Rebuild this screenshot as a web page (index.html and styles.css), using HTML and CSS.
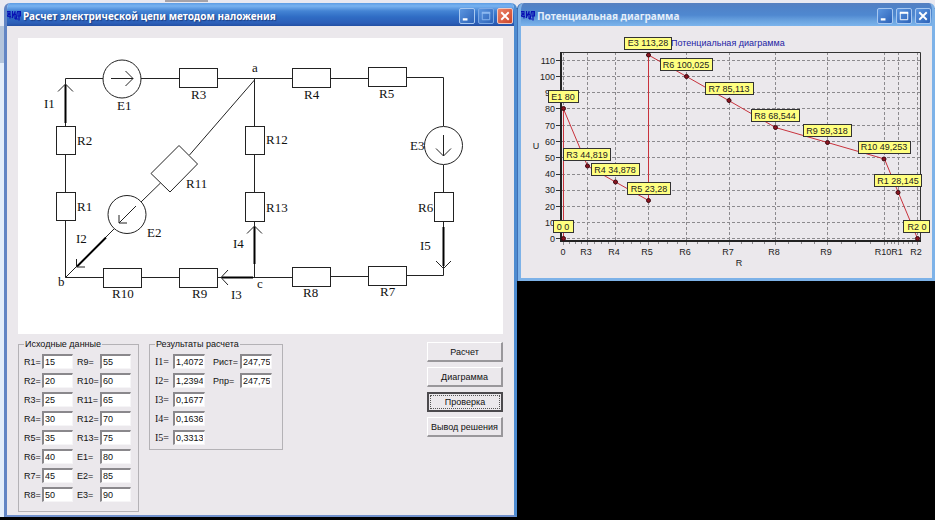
FILE: index.html
```html
<!DOCTYPE html>
<html lang="ru">
<head>
    <meta charset="UTF-8">
    <meta name="viewport" content="width=device-width, initial-scale=1.0">
    <title>Расчет электрической цепи методом наложения</title>
    <link rel="stylesheet" href="styles.css">
</head>
<body>
    <div class="desktop">
        <section class="window">
            <header class="title-bar">
                <svg class="app-icon" width="14" height="11" viewBox="0 0 14 11" fill="none" stroke="#0a12b4" stroke-width="1.2">
                    <path d="M0 1.5h3v7M1 2v4.5h3M0 6l3-3M5.5 1v7M5 8l3-6M8 1v8M6 4.5h3M9 9.5l1.5-8h3v4.5h-3M12 1v9.5M8 9h3"/>
                </svg>
                <h1>Расчет электрической цепи методом наложения</h1>
                <div class="title-buttons">
                    <button type="button" class="title-button" aria-label="Свернуть">
                        <svg viewBox="0 0 15 15"><path d="M3 11h5" stroke-width="2.4"/></svg>
                    </button>
                    <button type="button" class="title-button disabled" aria-label="Развернуть" disabled>
                        <svg viewBox="0 0 15 15"><path d="M3.5 4v7.5h8V4z"/><path d="M3 4h9" stroke-width="2"/></svg>
                    </button>
                    <button type="button" class="title-button close" aria-label="Закрыть">
                        <svg viewBox="0 0 15 15"><path d="M3.5 3.5l8 8M11.500 3.5l-8 8" stroke-width="2"/></svg>
                    </button>
                </div>
            </header>

            <div class="window-body">
                <svg class="circuit" viewBox="18 38 485 296">
                    <!-- wires -->
                    <path class="wire" d="M103 78.500H65.500V126M141 78.500H179M217 78.500H292M330 78.500H368M406 77.500H443.500V126
                        M443.500 165V192M443.500 221V275.500H406M368 276.500H330M292 277.500H217M179 277.500H141M103 277.500H65.500V220M65.500 192V154
                        M254.500 79V126M254.500 154V192M254.500 221V277M254.500 80L189.500 155M160.500 183L141 202M114 229L65.500 277.500"/>

                    <!-- resistors -->
                    <rect class="wire" x="179.5" y="68.5" width="38" height="19"/>
                    <rect class="wire" x="292.5" y="68.5" width="38" height="19"/>
                    <rect class="wire" x="368.5" y="67.5" width="38" height="19"/>
                    <rect class="wire" x="56.5" y="126.5" width="19" height="28"/>
                    <rect class="wire" x="56.5" y="192.5" width="19" height="28"/>
                    <rect class="wire" x="245.5" y="126.5" width="19" height="28"/>
                    <rect class="wire" x="245.5" y="192.5" width="19" height="29"/>
                    <rect class="wire" x="434.5" y="192.5" width="19" height="29"/>
                    <rect class="wire" x="103.5" y="268.5" width="38" height="19"/>
                    <rect class="wire" x="179.5" y="268.5" width="38" height="19"/>
                    <rect class="wire" x="292.5" y="267.5" width="38" height="19"/>
                    <rect class="wire" x="368.5" y="266.5" width="38" height="19"/>
                    <path class="wire" d="M179 145.500L197.500 164L170 192L151 173.500Z"/>

                    <!-- sources -->
                    <circle class="wire" cx="122" cy="79" r="19"/>
                    <circle class="wire" cx="443.5" cy="145.5" r="19"/>
                    <circle class="wire" cx="127" cy="214.5" r="19"/>
                    <path class="wire" d="M111 78.500H133M125.500 71L133 78.500L125.500 86M443.500 135V156M436 148.500L443.500 156L451 148.500M136 206L119 223M119 215V223H127"/>

                    <!-- currents -->
                    <path class="current" d="M65.500 85V123M106 237.500L77 266.500M253 277.500H222M254.500 264V227M443.500 227V266"/>
                    <path class="wire" d="M58 91.500L65.500 84L73 91.500M76.500 259V267H85M228 270L221 277.500L228 285M247 233.500L254.500 226L262 233.500M436 261L443.500 268.500L451 261"/>

                    <g class="circuit-labels">
                        <text x="252" y="72">a</text>
                        <text x="58" y="286">b</text>
                        <text x="257" y="288">c</text>
                        <text x="117" y="110">E1</text>
                        <text x="147" y="237">E2</text>
                        <text x="410" y="150">E3</text>
                        <text x="44" y="108">I1</text>
                        <text x="76" y="243">I2</text>
                        <text x="231" y="299">I3</text>
                        <text x="233" y="248">I4</text>
                        <text x="420" y="250">I5</text>
                        <text x="77" y="211">R1</text>
                        <text x="77" y="145">R2</text>
                        <text x="191" y="99">R3</text>
                        <text x="304" y="99">R4</text>
                        <text x="379" y="98">R5</text>
                        <text x="418" y="212">R6</text>
                        <text x="380" y="296">R7</text>
                        <text x="303" y="297">R8</text>
                        <text x="192" y="298">R9</text>
                        <text x="112" y="298">R10</text>
                        <text x="186" y="188">R11</text>
                        <text x="266" y="144">R12</text>
                        <text x="266" y="212">R13</text>
                    </g>
                </svg>

                <form class="controls">
                    <fieldset class="group">
                        <legend>Исходные данные</legend>
                        <div class="columns source-data">
                            <div class="fields fields-r">
                                <label for="r1">R1=</label><input type="text" id="r1" value="15">
                                <label for="r2">R2=</label><input type="text" id="r2" value="20">
                                <label for="r3">R3=</label><input type="text" id="r3" value="25">
                                <label for="r4">R4=</label><input type="text" id="r4" value="30">
                                <label for="r5">R5=</label><input type="text" id="r5" value="35">
                                <label for="r6">R6=</label><input type="text" id="r6" value="40">
                                <label for="r7">R7=</label><input type="text" id="r7" value="45">
                                <label for="r8">R8=</label><input type="text" id="r8" value="50">
                            </div>
                            <div class="fields fields-e">
                                <label for="r9">R9=</label><input type="text" id="r9" value="55">
                                <label for="r10">R10=</label><input type="text" id="r10" value="60">
                                <label for="r11">R11=</label><input type="text" id="r11" value="65">
                                <label for="r12">R12=</label><input type="text" id="r12" value="70">
                                <label for="r13">R13=</label><input type="text" id="r13" value="75">
                                <label for="e1">E1=</label><input type="text" id="e1" value="80">
                                <label for="e2">E2=</label><input type="text" id="e2" value="85">
                                <label for="e3">E3=</label><input type="text" id="e3" value="90">
                            </div>
                        </div>
                    </fieldset>

                    <fieldset class="group">
                        <legend>Результаты расчета</legend>
                        <div class="columns results">
                            <div class="fields fields-i">
                                <label for="i1">I1=</label><input type="text" id="i1" value="1,4072">
                                <label for="i2">I2=</label><input type="text" id="i2" value="1,2394">
                                <label for="i3">I3=</label><input type="text" id="i3" value="0,1677">
                                <label for="i4">I4=</label><input type="text" id="i4" value="0,1636">
                                <label for="i5">I5=</label><input type="text" id="i5" value="0,3313">
                            </div>
                            <div class="fields fields-p">
                                <label for="pSource">Pист=</label><input type="text" id="pSource" value="247,75">
                                <label for="pLoad">Pпр=</label><input type="text" id="pLoad" value="247,75">
                            </div>
                        </div>
                    </fieldset>

                    <div class="actions">
                        <button type="button" class="action">Расчет</button>
                        <button type="button" class="action">Диаграмма</button>
                        <button type="button" class="action active">Проверка</button>
                        <button type="button" class="action">Вывод решения</button>
                    </div>
                </form>
            </div>
        </section>

        <section class="window inactive">
            <header class="title-bar">
                <svg class="app-icon" width="14" height="11" viewBox="0 0 14 11" fill="none" stroke="#0a12b4" stroke-width="1.2">
                    <path d="M0 1.5h3v7M1 2v4.5h3M0 6l3-3M5.5 1v7M5 8l3-6M8 1v8M6 4.5h3M9 9.5l1.5-8h3v4.5h-3M12 1v9.5M8 9h3"/>
                </svg>
                <h1>Потенциальная диаграмма</h1>
                <div class="title-buttons">
                    <button type="button" class="title-button" aria-label="Свернуть">
                        <svg viewBox="0 0 15 15"><path d="M3 11h5" stroke-width="2.4"/></svg>
                    </button>
                    <button type="button" class="title-button" aria-label="Развернуть">
                        <svg viewBox="0 0 15 15"><path d="M3.5 4v7.5h8V4z"/><path d="M3 4h9" stroke-width="2"/></svg>
                    </button>
                    <button type="button" class="title-button" aria-label="Закрыть">
                        <svg viewBox="0 0 15 15"><path d="M3.5 3.5l8 8M11.500 3.5l-8 8" stroke-width="2"/></svg>
                    </button>
                </div>
            </header>

            <svg class="chart" viewBox="521 26 411 252">
                <text class="chart-title" x="671" y="46">Потенциальная диаграмма</text>

                <!-- grid -->
                <path class="grid" d="M562 60.500H920M562 76.500H920M562 92.500H920M562 108.500H920M562 125.500H920M562 141.500H920M562 157.500H920M562 174.500H920M562 190.500H920M562 206.500H920M562 222.500H920M562 238.500H920"/>
                <path class="grid" d="M563.500 52V109M587.500 52V241M615.500 52V241M648.500 52V241M686.500 52V241M729.500 52V241M775.500 52V241M827.500 52V241M884.500 52V241M898.500 52V241M917.500 52V241"/>
                <path class="frame" d="M560 52.500H920.500V241"/>
                <path class="axis" d="M561 52V241H921"/>
                <path class="ticks" d="M556 60.500h4M556 76.500h4M556 92.500h4M556 108.500h4M556 125.500h4M556 141.500h4M556 157.500h4M556 174.500h4M556 190.500h4M556 206.500h4M556 222.500h4M556 238.500h4"/>
                <path class="ticks minor" d="M563.500 242v3M569.500 242v2M575.500 242v2M581.500 242v2M587.500 242v3M594.500 242v2M601.500 242v2M608.500 242v2M615.500 242v3M623.500 242v2M631.500 242v2M640.500 242v2M648.500 242v3
                    M658.500 242v2M667.500 242v2M677.500 242v2M686.500 242v3M697.500 242v2M708.500 242v2M718.500 242v2M729.500 242v3M741.500 242v2M752.500 242v2M764.500 242v2M775.500 242v3
                    M788.500 242v2M801.500 242v2M814.500 242v2M827.500 242v3M841.500 242v2M855.500 242v2M870.500 242v2M884.500 242v3M887.500 242v2M891.500 242v2M894.500 242v2M898.500 242v3M903.500 242v2M908.500 242v2M912.500 242v2M917.500 242v3"/>

                <g class="axis-labels axis-u">
                    <text x="555" y="64">110</text>
                    <text x="555" y="80">100</text>
                    <text x="555" y="96">90</text>
                    <text x="555" y="112">80</text>
                    <text x="555" y="129">70</text>
                    <text x="555" y="145">60</text>
                    <text x="555" y="161">50</text>
                    <text x="555" y="177">40</text>
                    <text x="555" y="193">30</text>
                    <text x="555" y="210">20</text>
                    <text x="555" y="226">10</text>
                    <text x="555" y="242">0</text>
                </g>
                <g class="axis-labels axis-r">
                    <text x="563" y="255">0</text>
                    <text x="586" y="255">R3</text>
                    <text x="614" y="255">R4</text>
                    <text x="647" y="255">R5</text>
                    <text x="685" y="255">R6</text>
                    <text x="728" y="255">R7</text>
                    <text x="774" y="255">R8</text>
                    <text x="826" y="255">R9</text>
                    <text x="883" y="255">R10</text>
                    <text x="897" y="255">R1</text>
                    <text x="916" y="255">R2</text>
                    <text x="739" y="266">R</text>
                    <text x="536" y="149">U</text>
                </g>

                <polyline class="series" points="563.5,238.5 563.5,109 587.5,166 615.5,182 648.5,200.500 648.5,55 686.5,76.500 729.5,101 775.5,127.500 827.5,142.500 884.5,159 898.5,193 917.500,238.5"/>
                <g class="points">
                    <circle cx="563.5" cy="238.5" r="2"/>
                    <circle cx="563.5" cy="108.5" r="2"/>
                    <circle cx="587.5" cy="166" r="2"/>
                    <circle cx="615.5" cy="182" r="2"/>
                    <circle cx="648.5" cy="200.5" r="2"/>
                    <circle cx="648.5" cy="55" r="2"/>
                    <circle cx="686.5" cy="76.5" r="2"/>
                    <circle cx="729" cy="100.5" r="2"/>
                    <circle cx="775.5" cy="127.5" r="2"/>
                    <circle cx="827.5" cy="142.5" r="2"/>
                    <circle cx="884" cy="159" r="2"/>
                    <circle cx="898" cy="192.5" r="2"/>
                    <circle cx="917.5" cy="238.5" r="2"/>
                </g>

                <g class="marks">
                    <rect x="553.5" y="220.5" width="20" height="12"/><text x="563" y="230">0 0</text>
                    <rect x="548.5" y="90.5" width="30" height="12"/><text x="563" y="100">E1 80</text>
                    <rect x="563.5" y="148.5" width="47" height="12"/><text x="587" y="158">R3 44,819</text>
                    <rect x="591.5" y="163.5" width="48" height="12"/><text x="615" y="173">R4 34,878</text>
                    <rect x="627.5" y="182.5" width="43" height="12"/><text x="649" y="192">R5 23,28</text>
                    <rect x="624.5" y="37.5" width="47" height="12"/><text x="648" y="46">E3 113,28</text>
                    <rect x="660.5" y="58.5" width="52" height="12"/><text x="686" y="68">R6 100,025</text>
                    <rect x="705.5" y="82.5" width="48" height="12"/><text x="729" y="92">R7 85,113</text>
                    <rect x="751.5" y="109.5" width="48" height="12"/><text x="775" y="119">R8 68,544</text>
                    <rect x="803.5" y="124.5" width="48" height="12"/><text x="827" y="134">R9 59,318</text>
                    <rect x="858.5" y="141.5" width="52" height="12"/><text x="884" y="150">R10 49,253</text>
                    <rect x="874.5" y="174.5" width="47" height="12"/><text x="898" y="184">R1 28,145</text>
                    <rect x="903.5" y="220.5" width="26" height="12"/><text x="917" y="230">R2 0</text>
                </g>
            </svg>
        </section>
    </div>
</body>
</html>
```

FILE: styles.css
```css
* {
    margin: 0;
    padding: 0;
    box-sizing: border-box;
}

body {
    background-color: #000;
    font-family: "Liberation Sans", Arial, sans-serif;
    font-size: 9px;
    line-height: 12px;
    color: #111;
}

.desktop {
    display: grid;
    grid-template-columns: 513fr 417fr;
    column-gap: 1px;
    align-items: start;
    padding: 3px 0 3px 4px;
    background:
        linear-gradient(#a5a2a8, #a5a2a8) 165px 0 / 43px 2px no-repeat,
        linear-gradient(#e9e9f1, #e9e9f1) 0 0 / 100% 8px no-repeat,
        linear-gradient(#e4e9f3 26px, #b4c5dc 26px, #b4c5dc 63px, #e4eefa 63px) 0 0 / 5px calc(100% - 3px) no-repeat,
        #000;
}

/* Windows */

.window {
    background-color: #ebe8ec;
    border: solid #6285c4;
    border-width: 0 3px 2px;
    border-right-color: #4d8bd0;
    border-bottom-color: #7090cc;
    border-radius: 6px 6px 0 0;
    overflow: hidden;
}

.window.inactive {
    border-color: #7db2e8;
    border-bottom-width: 3px;
    box-shadow: -1px 0 #3f6fb4;
}

.title-bar {
    display: flex;
    align-items: center;
    gap: 2px;
    height: 23px;
    padding: 2px 1px 0 0;
    background: linear-gradient(#5c9ce4, #78b2f0 3px, #4484d4 8px, #2f6cc4 14px, #2c5fb8 20px, #2450a4);
}

.inactive .title-bar {
    background: linear-gradient(#5680c0, #4f82c8 4px, #4f88d0 12px, #6ba4e0 18px, #7cb4ec);
}

.app-icon {
    flex: none;
}

.title-bar h1 {
    flex: 1;
    font-family: "Noto Sans", "Trebuchet MS", sans-serif;
    font-size: 10px;
    font-weight: 700;
    line-height: 14px;
    white-space: nowrap;
    color: #fff;
    text-shadow: 1px 1px 1px #1c3c80;
}

.inactive .title-bar h1 {
    color: #e4eefa;
    text-shadow: none;
}

.title-buttons {
    display: flex;
    gap: 3px;
}

.title-button {
    width: 16px;
    height: 16px;
    border: 1px solid #a8c8f0;
    border-radius: 2px;
    background: linear-gradient(135deg, #5c96e0, #2c62b8);
}

.title-button svg {
    display: block;
    width: 100%;
    fill: none;
    stroke: #fff;
}

.title-button.disabled {
    border-color: #7ca8e4;
}

.title-button.disabled svg {
    stroke: #8cb8f0;
}

.title-button.close {
    border-color: #f0c8c0;
    background: linear-gradient(135deg, #ec8468, #cc4428);
}

.window-body {
    padding: 12px 11px 3px;
}

/* Circuit */

.circuit {
    display: block;
    width: 100%;
    background-color: #fff;
}

.wire {
    fill: none;
    stroke: #222;
    stroke-width: 1;
}

.current {
    fill: none;
    stroke: #000;
    stroke-width: 2;
}

.circuit-labels {
    font-family: "Liberation Serif", "Times New Roman", serif;
    font-size: 13px;
    fill: #111;
}

/* Input and result fields */

.controls {
    display: flex;
    align-items: flex-start;
    gap: 10px;
    padding-top: 4px;
}

.group {
    border: 1px solid #b4b2b6;
    padding: 4px 7px 4px 5px;
}

.group legend {
    padding: 0 1px;
    white-space: nowrap;
}

.columns {
    display: flex;
    align-items: flex-start;
    gap: 4px;
}

.source-data {
    padding-bottom: 5px;
}

.results {
    gap: 8px;
    padding-right: 3px;
}

.fields {
    display: grid;
    row-gap: 4px;
    align-items: center;
}

.fields-r {
    grid-template-columns: 18px 31px;
}

.fields-e {
    grid-template-columns: 23px 31px;
}

.fields-i {
    grid-template-columns: 18px 32px;
}

.fields-i label {
    font-family: "Liberation Serif", "Times New Roman", serif;
    font-size: 10px;
}

.fields-p {
    grid-template-columns: 27px 32px;
}

.fields label {
    white-space: nowrap;
}

.fields input {
    width: 100%;
    height: 15px;
    padding: 0 1px;
    border: solid;
    border-width: 2px 1px 1px 2px;
    border-color: #8a888c #f6f5f7 #f6f5f7 #8a888c;
    background-color: #fff;
    font: inherit;
    color: inherit;
}

.actions {
    display: grid;
    gap: 5px;
    width: 76px;
    margin-left: auto;
    padding-top: 4px;
}

.action {
    height: 20px;
    border: solid;
    border-width: 1px 2px 2px 1px;
    border-color: #fff #99979b #99979b #fff;
    background-color: #ebe8ec;
    font: inherit;
    color: inherit;
    white-space: nowrap;
}

.action.active {
    border: 2px solid #4c4a4e;
    outline: 1px dotted #555;
    outline-offset: -4px;
}

/* Diagram */

.chart {
    display: block;
    width: 100%;
    font-size: 9px;
}

.chart-title {
    fill: #1c1ca4;
}

.grid {
    fill: none;
    stroke: #8c8a8e;
    stroke-dasharray: 3 2;
}

.frame,
.ticks {
    fill: none;
    stroke: #333;
}

.ticks.minor {
    stroke: #8c8a8e;
}

.axis {
    fill: none;
    stroke: #222;
    stroke-width: 2;
}

.axis-labels {
    fill: #222;
}

.axis-u {
    text-anchor: end;
}

.axis-r {
    text-anchor: middle;
}

.series {
    fill: none;
    stroke: #c8323c;
}

.points circle {
    fill: #8c1420;
    stroke: #3c0810;
    stroke-width: 1;
}

.marks rect {
    fill: #ffff80;
    stroke: #333;
}

.marks text {
    fill: #222;
    text-anchor: middle;
}
```
